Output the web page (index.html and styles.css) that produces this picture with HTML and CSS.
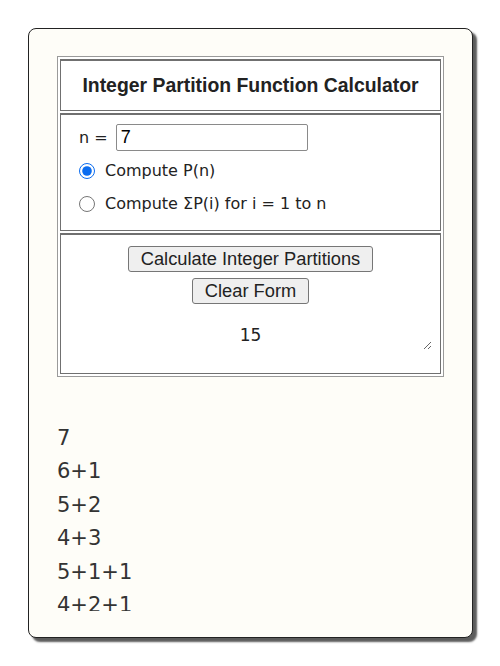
FILE: index.html
```html
<html>
	<head>
		<title>Integer Partition Function Calculator</title>
		<link rel="stylesheet" href="styles.css">
	</head>
	<body>
		<div class="card">
			<div class="inner">
				<form id="calc">
					<table class="calc-table">
						<tr>
							<td class="title">Integer Partition Function Calculator</td>
						</tr>
						<tr>
							<td class="options">
								<div class="row">n = <input id="n" type="text" value="7" /></div>
								<label class="row"><input type="radio" name="mode" checked /> Compute P(n)</label>
								<label class="row"><input type="radio" name="mode" /> Compute &Sigma;P(i) for i = 1 to n</label>
							</td>
						</tr>
						<tr>
							<td class="actions">
								<button type="button">Calculate Integer Partitions</button>
								<button type="reset">Clear Form</button>
								<textarea class="result">15</textarea>
							</td>
						</tr>
					</table>
				</form>
				<div class="partitions">
					<div>7</div>
					<div>6+1</div>
					<div>5+2</div>
					<div>4+3</div>
					<div>5+1+1</div>
					<div>4+2+1</div>
				</div>
			</div>
		</div>
	</body>
</html>
```

FILE: styles.css
```css
body {
	margin: 0;
	background: #ffffff;
	color: #222;
	font: 15.8px "DejaVu Sans", Verdana, sans-serif;
}
.card {
	box-sizing: border-box;
	width: 445px;
	height: 610px;
	margin: 28px 0 0 28px;
	padding: 27px 28px 26px;
	background: #fefdf8;
	border: 1px solid #222;
	border-radius: 8px;
	box-shadow: 4px 4px 2px #5c5c5c;
}
.inner {
	height: 100%;
	overflow: hidden;
}
.calc-table {
	width: 387px;
	border: 1px solid #9a9a9a;
	border-spacing: 2px;
	background: #ffffff;
}
.calc-table td {
	border: 1px solid #707070;
	border-top-width: 2px;
	padding: 0;
}
.title {
	height: 52px;
	text-align: center;
	font: bold 19.4px "Liberation Sans", Arial, sans-serif;
	color: #222;
}
.options {
	padding: 6px 0 10px 18px !important;
}
.row {
	display: flex;
	align-items: center;
	height: 33px;
}
.options input[type="text"] {
	width: 192px;
	height: 27px;
	box-sizing: border-box;
	margin-left: 8px;
	border: 1px solid #8a8a8a;
	border-radius: 2px;
	padding: 0 4px;
	font: 18px "Liberation Sans", Arial, sans-serif;
}
.options input[type="radio"] {
	width: 16px;
	height: 16px;
	margin: 0 10px 0 0;
	accent-color: #0a6cf0;
}
.actions {
	text-align: center;
	padding: 11px 0 23px !important;
}
.actions button {
	display: block;
	box-sizing: border-box;
	margin: 0 auto 6px;
	height: 26px;
	padding: 0 12px;
	font: 18.3px "Liberation Sans", Arial, sans-serif;
	color: #222;
	background: #efefef;
	border: 1px solid #767676;
	border-radius: 3px;
}
.result {
	display: block;
	box-sizing: border-box;
	width: 362px;
	height: 40px;
	margin: 0 auto;
	border: none;
	outline: none;
	background: transparent;
	text-align: center;
	font: 17px "DejaVu Sans", Verdana, sans-serif;
	color: #222;
	padding: 15px 0 0;
	overflow: hidden;
}
.partitions {
	margin-top: 45px;
	font-size: 21px;
	line-height: 33.4px;
	color: #333;
}
```
